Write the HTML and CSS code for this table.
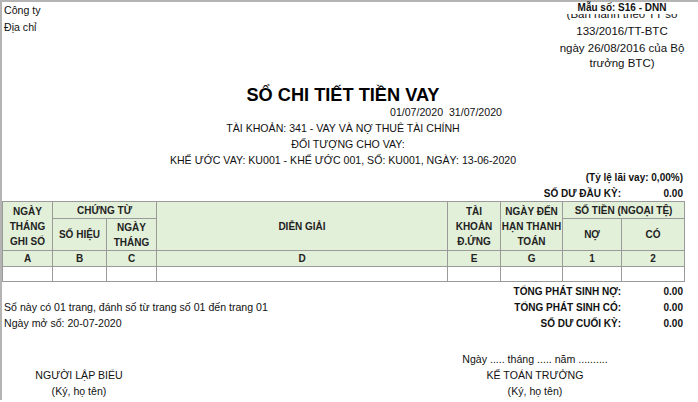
FILE: index.html
```html
<!DOCTYPE html>
<html lang="vi">
<head>
<meta charset="utf-8">
<link rel="stylesheet" href="styles.css">
</head>
<body>
<div class="sheet">
  <div class="top">
    <div class="company">
      <div class="line">Công ty</div>
      <div class="line">Địa chỉ</div>
    </div>
    <div class="form-no">
      <div class="form-code">Mẫu số: S16 - DNN</div>
      <div class="clip"><span>(Ban hành theo TT số</span></div>
      <div class="form-line">133/2016/TT-BTC</div>
      <div class="form-line gap">ngày 26/08/2016 của Bộ</div>
      <div class="form-line tight">trưởng BTC)</div>
    </div>
  </div>

  <h1 class="title">SỔ CHI TIẾT TIỀN VAY</h1>
  <div class="period">01/07/2020&nbsp; 31/07/2020</div>
  <div class="center-line">TÀI KHOẢN: 341 - VAY VÀ NỢ THUÊ TÀI CHÍNH</div>
  <div class="center-line obj">ĐỐI TƯỢNG CHO VAY:</div>
  <div class="center-line contract">KHẾ ƯỚC VAY: KU001 - KHẾ ƯỚC 001, SỐ: KU001, NGÀY: 13-06-2020</div>
  <div class="rate">(Tỷ lệ lãi vay: 0,00%)</div>
  <div class="kv"><span class="k">SỐ DƯ ĐẦU KỲ:</span><span class="v">0.00</span></div>

  <table class="ledger">
    <colgroup>
      <col class="c-a"><col class="c-b"><col class="c-c"><col class="c-d">
      <col class="c-e"><col class="c-g"><col class="c-1"><col class="c-2">
    </colgroup>
    <thead>
      <tr class="h1">
        <th rowspan="2">NGÀY<br>THÁNG<br>GHI SỔ</th>
        <th colspan="2">CHỨNG TỪ</th>
        <th rowspan="2">DIỄN GIẢI</th>
        <th rowspan="2">TÀI<br>KHOẢN<br>Đ.ỨNG</th>
        <th rowspan="2">NGÀY ĐẾN<br>HẠN THANH<br>TOÁN</th>
        <th colspan="2">SỐ TIỀN (NGOẠI TỆ)</th>
      </tr>
      <tr class="h2">
        <th>SỐ HIỆU</th>
        <th>NGÀY<br>THÁNG</th>
        <th>NỢ</th>
        <th>CÓ</th>
      </tr>
      <tr class="h3">
        <th>A</th><th>B</th><th>C</th><th>D</th><th>E</th><th>G</th><th>1</th><th>2</th>
      </tr>
    </thead>
    <tbody>
      <tr class="empty"><td></td><td></td><td></td><td></td><td></td><td></td><td></td><td></td></tr>
    </tbody>
  </table>

  <div class="bottom">
    <div class="notes">
      <div class="line">Sổ này có 01 trang, đánh số từ trang số 01 đến trang 01</div>
      <div class="line">Ngày mở sổ: 20-07-2020</div>
    </div>
    <div class="totals">
      <div class="kv"><span class="k">TỔNG PHÁT SINH NỢ:</span><span class="v">0.00</span></div>
      <div class="kv"><span class="k">TỔNG PHÁT SINH CÓ:</span><span class="v">0.00</span></div>
      <div class="kv"><span class="k">SỐ DƯ CUỐI KỲ:</span><span class="v">0.00</span></div>
    </div>
  </div>

  <div class="signs">
    <div class="sign left">
      <div class="line">NGƯỜI LẬP BIỂU</div>
      <div class="line">(Ký, họ tên)</div>
    </div>
    <div class="sign right">
      <div class="line">Ngày ..... tháng ..... năm ..........</div>
      <div class="line">KẾ TOÁN TRƯỞNG</div>
      <div class="line">(Ký, họ tên)</div>
    </div>
  </div>
</div>
</body>
</html>
```

FILE: styles.css
```css
html, body {
  margin: 0;
  padding: 0;
  background: #fff;
}
body {
  font-family: "Liberation Sans", Arial, sans-serif;
  font-size: 10.6px;
  color: #111;
  width: 698px;
  height: 402px;
  overflow: hidden;
}
.sheet {
  border-left: 2px solid #b4b4b4;
  border-top: 2px solid #b4b4b4;
  height: 400px;
  box-sizing: border-box;
}
.top {
  display: flex;
  justify-content: space-between;
  height: 69px;
}
.company {
  padding-left: 2px;
}
.line {
  line-height: 16px;
}
.company .line {
  line-height: 17px;
}
.form-no {
  width: 150px;
  margin-right: 1px;
  text-align: center;
  font-size: 11.5px;
}
.form-code {
  font-weight: bold;
  font-size: 10px;
  line-height: 12px;
}
.clip {
  height: 9px;
  overflow: hidden;
}
.clip span {
  display: block;
  line-height: 16px;
  margin-top: -8px;
}
.form-line {
  line-height: 16px;
}
.form-line.gap {
  margin-top: 1px;
}
.form-line.tight {
  line-height: 14px;
}
.title {
  margin: 14px 0 0;
  padding-right: 14px;
  text-align: center;
  font-size: 18.2px;
  line-height: 20px;
  font-weight: bold;
  color: #000;
}
.period {
  margin-left: 388px;
  line-height: 14px;
}
.center-line {
  text-align: center;
  line-height: 16px;
  margin-top: 1px;
  padding-right: 14px;
}
.center-line.obj {
  padding-right: 4px;
  line-height: 15px;
}
.center-line.contract {
  line-height: 15px;
}
.rate {
  text-align: right;
  padding-right: 15px;
  font-weight: bold;
  font-size: 10px;
  line-height: 16px;
  margin-top: 2px;
}
.kv {
  display: flex;
  justify-content: flex-end;
  font-weight: bold;
  font-size: 10px;
  line-height: 16px;
  padding-right: 15px;
}
.kv .k {
  text-align: right;
}
.kv .v {
  width: 62px;
  text-align: right;
}
.ledger {
  border-collapse: collapse;
  table-layout: fixed;
  width: 683px;
  margin-top: -1px;
  font-size: 10px;
}
.ledger th, .ledger td {
  border: 1px solid #9a9a9a;
  padding: 0;
  font-weight: bold;
  text-align: center;
  color: #222;
}
.ledger thead th {
  background: #e2f0d9;
  line-height: 15px;
}
.c-a { width: 50px; }
.c-b { width: 54px; }
.c-c { width: 50px; }
.c-d { width: 291px; }
.c-e { width: 53px; }
.c-g { width: 62px; }
.c-1 { width: 59px; }
.c-2 { width: 63px; }
.h1 th { height: 16px; }
.h2 th { height: 31px; }
.h3 th { height: 15px; line-height: 13px; }
.empty td { height: 14px; }
.bottom {
  display: flex;
  justify-content: space-between;
}
.notes {
  padding-top: 17px;
  padding-left: 2px;
}
.totals {
  padding-top: 2px;
}
.signs {
  display: flex;
  margin-top: 19px;
}
.sign {
  text-align: center;
}
.sign.left {
  width: 154px;
  padding-top: 16px;
}
.sign.right {
  margin-left: 299px;
  width: 160px;
}
```
